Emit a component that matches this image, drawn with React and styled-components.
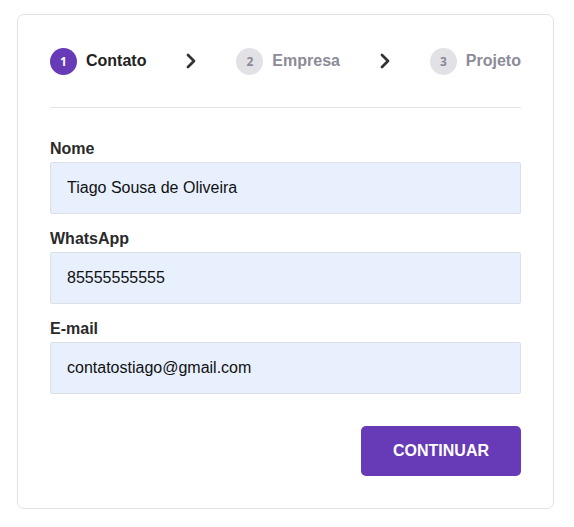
import React from "react"
import styled, { createGlobalStyle } from "styled-components"
import { ChevronRight } from "lucide-react"

const Global = createGlobalStyle`
  body {
    margin: 0;
    background: #ffffff;
    font-family: "Liberation Sans", Arial, sans-serif;
  }
`

const steps = [
  { n: 1, label: "Contato", active: true },
  { n: 2, label: "Empresa" },
  { n: 3, label: "Projeto" },
]

const fields = [
  { label: "Nome", value: "Tiago Sousa de Oliveira" },
  { label: "WhatsApp", value: "85555555555" },
  { label: "E-mail", value: "contatostiago@gmail.com" },
]

export default function App() {
  return (
    <Page>
      <Global />
      <Card>
        <Stepper>
          {steps.map((s, i) => (
            <React.Fragment key={s.n}>
              {i > 0 && <ChevronRight size={24} strokeWidth={2.75} color="#333" />}
              <Step>
                <Circle active={s.active}>{s.n}</Circle>
                <StepLabel active={s.active}>{s.label}</StepLabel>
              </Step>
            </React.Fragment>
          ))}
        </Stepper>
        <Divider />
        <Form>
          {fields.map((f) => (
            <Field key={f.label}>
              <Label>{f.label}</Label>
              <Input defaultValue={f.value} />
            </Field>
          ))}
          <Actions>
            <Button>CONTINUAR</Button>
          </Actions>
        </Form>
      </Card>
    </Page>
  )
}

const Page = styled.div`
  padding: 14px 0 0 17px;
`

const Card = styled.div`
  width: 537px;
  box-sizing: border-box;
  border: 1px solid #e2e2e2;
  border-radius: 7px;
  padding: 32px 32px 32px 32px;
`

const Stepper = styled.div`
  display: flex;
  align-items: center;
  justify-content: space-between;
  height: 28px;
`

const Step = styled.div`
  display: flex;
  align-items: center;
  gap: 9px;
`

const Circle = styled.div`
  width: 27px;
  height: 27px;
  border-radius: 50%;
  display: flex;
  align-items: center;
  justify-content: center;
  font-family: "Open Sans", sans-serif;
  font-size: 12px;
  font-weight: 700;
  background: ${(p) => (p.active ? "#673ab7" : "#e2e1e6")};
  color: ${(p) => (p.active ? "#ffffff" : "#8a8997")};
`

const StepLabel = styled.span`
  font-size: 16px;
  font-weight: 700;
  color: ${(p) => (p.active ? "#222222" : "#8c8b98")};
`

const Divider = styled.hr`
  border: none;
  border-top: 1px solid #e4e4e4;
  margin: 32px 0 32px;
`

const Form = styled.div`
  display: flex;
  flex-direction: column;
  gap: 16px;
`

const Field = styled.label`
  display: flex;
  flex-direction: column;
  gap: 4px;
`

const Label = styled.span`
  font-size: 16px;
  font-weight: 700;
  line-height: 18px;
  color: #2a2a2a;
`

const Input = styled.input`
  height: 52px;
  box-sizing: border-box;
  border: 1px solid #dcdfe6;
  border-radius: 2px;
  background: #e8f0fe;
  padding: 0 16px;
  font-family: "Liberation Sans", Arial, sans-serif;
  font-size: 16px;
  color: #111;
  outline: none;
`

const Actions = styled.div`
  display: flex;
  justify-content: flex-end;
  margin-top: 16px;
`

const Button = styled.button`
  width: 160px;
  height: 50px;
  border: none;
  border-radius: 5px;
  background: #673ab7;
  color: #ffffff;
  font-family: "Liberation Sans", Arial, sans-serif;
  font-size: 16px;
  font-weight: 700;
  cursor: pointer;
`
